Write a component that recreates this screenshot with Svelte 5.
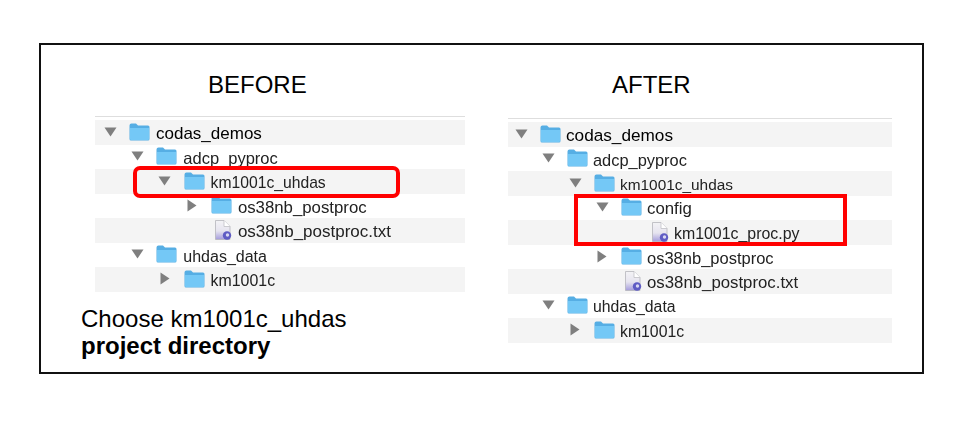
<script>
  const before = [
    { name: "codas_demos", level: 0, arrow: "down", kind: "folder", size: 17 },
    { name: "adcp_pyproc", level: 1, arrow: "down", kind: "folder", size: 16.5 },
    { name: "km1001c_uhdas", level: 2, arrow: "down", kind: "folder", size: 15.7 },
    { name: "os38nb_postproc", level: 3, arrow: "right", kind: "folder", size: 16.8 },
    { name: "os38nb_postproc.txt", level: 3, arrow: "", kind: "doc", size: 17 },
    { name: "uhdas_data", level: 1, arrow: "down", kind: "folder", size: 16 },
    { name: "km1001c", level: 2, arrow: "right", kind: "folder", size: 15.9 },
  ];
  const after = [
    { name: "codas_demos", level: 0, arrow: "down", kind: "folder", size: 17.2 },
    { name: "adcp_pyproc", level: 1, arrow: "down", kind: "folder", size: 16.4 },
    { name: "km1001c_uhdas", level: 2, arrow: "down", kind: "folder", size: 15.4 },
    { name: "config", level: 3, arrow: "down", kind: "folder", size: 16.8 },
    { name: "km1001c_proc.py", level: 4, arrow: "", kind: "doc", size: 15.9 },
    { name: "os38nb_postproc", level: 3, arrow: "right", kind: "folder", size: 16.5 },
    { name: "os38nb_postproc.txt", level: 3, arrow: "", kind: "doc", size: 16.8 },
    { name: "uhdas_data", level: 1, arrow: "down", kind: "folder", size: 15.8 },
    { name: "km1001c", level: 2, arrow: "right", kind: "folder", size: 15.8 },
  ];
</script>

{#snippet tree(rows)}
  {#each rows as row}
    <div class="row" class:top={row.level === 0} style="--level: {row.level}; font-size: {row.size}px">
      <span class="arrow">
        {#if row.arrow === "down"}
          <svg width="13" height="10" viewBox="0 0 13 10"><path d="M0.5 0.5H12.5L6.5 9.5Z" fill="#7f7f7f" /></svg>
        {:else if row.arrow === "right"}
          <svg width="10" height="13" viewBox="0 0 10 13"><path d="M0.5 0.5V12.5L9.5 6.5Z" fill="#7f7f7f" /></svg>
        {/if}
      </span>
      {#if row.kind === "folder"}
        <svg class="icon" width="21" height="18" viewBox="0 0 21 18">
          <path d="M0.5 2.5Q0.5 0.5 2.5 0.5H7L9 2.5H19Q20.5 2.5 20.5 4V16Q20.5 17.5 19 17.5H2Q0.5 17.5 0.5 16Z" fill="#56aee4" />
          <path d="M1 5H20V16Q20 17 19 17H2Q1 17 1 16Z" fill="#74c8f6" />
        </svg>
      {:else}
        <svg class="icon" width="21" height="20" viewBox="0 0 21 20">
          <defs>
            <linearGradient id="page" x1="0" y1="0" x2="0" y2="1">
              <stop offset="0" stop-color="#f3f3f5" />
              <stop offset="0.55" stop-color="#e6e4ef" />
              <stop offset="1" stop-color="#a49bdc" />
            </linearGradient>
          </defs>
          <path d="M4.5 0.5H13L19 6.5V19.5H4.5Z" fill="url(#page)" stroke="#b5b5bb" stroke-width="0.8" />
          <path d="M13 0.5V6.5H19" fill="#fff" stroke="#c0c0c5" stroke-width="0.8" />
          <circle cx="16" cy="15.5" r="4.2" fill="#5f5cc4" />
          <circle cx="16.5" cy="15" r="1.7" fill="#d9d8f2" />
        </svg>
      {/if}
      <span class="name">{row.name}</span>
    </div>
  {/each}
{/snippet}

<div class="frame">
  <section class="left">
    <h2 class="title">BEFORE</h2>
    <div class="list">
      {@render tree(before)}
      <div class="mark mark-before"></div>
    </div>
    <p class="caption">Choose km1001c_uhdas<br /><b>project directory</b></p>
  </section>
  <section class="right">
    <h2 class="title">AFTER</h2>
    <div class="list">
      {@render tree(after)}
      <div class="mark mark-after"></div>
    </div>
  </section>
</div>

<style>
  :global(body) {
    background: #fff;
    font-family: "Liberation Sans", sans-serif;
  }

  .frame {
    box-sizing: border-box;
    display: flex;
    width: 885px;
    height: 331px;
    margin: 43px 0 0 39px;
    border: 2px solid #111;
    color: #000;
  }

  .left {
    width: 370px;
    margin-left: 54px;
  }

  .right {
    width: 384px;
    margin-left: 43px;
  }

  .title {
    margin: 26px 0 0;
    font-size: 24px;
    font-weight: 400;
    line-height: 28px;
  }

  .left .title {
    margin-left: 113px;
  }

  .right .title {
    margin-left: 104px;
  }

  .list {
    position: relative;
    margin-top: 17px;
    padding-top: 3px;
    border-top: 1px solid #dedede;
  }

  .right .list {
    margin-top: 19px;
  }

  .row {
    box-sizing: border-box;
    display: flex;
    align-items: center;
    height: 24.5px;
    padding-left: calc(var(--level) * 27.3px);
    color: #222;
  }

  .row:nth-child(odd) {
    background: #f4f4f4;
  }

  .row.top {
    color: #000;
  }

  .arrow {
    display: flex;
    justify-content: center;
    width: 30px;
    margin-right: 4px;
    margin-top: -1px;
  }

  .right .arrow {
    width: 26px;
    margin-right: 6px;
  }

  .right .row {
    padding-left: calc(var(--level) * 27px);
  }

  .icon {
    flex: none;
    margin-right: 6px;
    margin-top: -1px;
    filter: blur(0.3px);
  }

  .right .icon {
    margin-right: 5px;
  }

  .name {
    padding-top: 4px;
    filter: blur(0.3px);
  }

  .right .name {
    padding-top: 3px;
  }

  .mark {
    position: absolute;
    box-sizing: border-box;
    border: 4px solid #f00;
  }

  .mark-before {
    left: 38px;
    top: 49px;
    width: 267px;
    height: 32px;
    border-radius: 7px;
  }

  .mark-after {
    left: 66px;
    top: 75px;
    width: 273px;
    height: 52px;
  }

  .caption {
    margin: 13px 0 0 -14px;
    font-size: 24px;
    line-height: 27px;
  }
</style>
